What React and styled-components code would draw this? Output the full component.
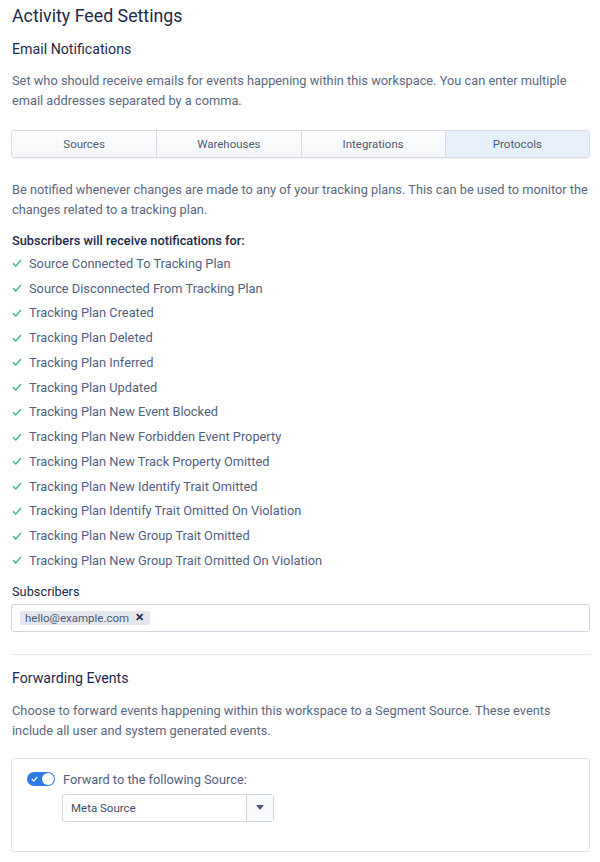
import React from "react";
import styled, { createGlobalStyle } from "styled-components";

const Global = createGlobalStyle`
  html, body { margin: 0; padding: 0; background: #fff; }
  body { font-family: Roboto, "Noto Sans", sans-serif; -webkit-font-smoothing: antialiased; }
  * { box-sizing: border-box; }
`;

const Page = styled.div`
  padding: 4px 10px 10px 12px;
  width: 600px;
  color: #525f7f;
  font-size: 12.8px;
`;

const Title = styled.h1`
  margin: 0;
  font-size: 17.8px;
  font-weight: 400;
  color: #1b2a4a;
  line-height: 24px;
`;

const SubTitle = styled.h2`
  margin: ${(p) => p.$mt ?? 9}px 0 0;
  font-size: 14.2px;
  font-weight: 400;
  color: #1b2a4a;
  line-height: 24px;
`;

const Para = styled.p`
  margin: ${(p) => p.$mt || 0}px 0 0;
  font-size: 12.8px;
  line-height: 20px;
  color: #5c6880;
`;

const Tabs = styled.div`
  margin-top: 19px;
  margin-left: -1px;
  display: grid;
  grid-template-columns: repeat(4, 1fr);
  border: 1px solid #d8dde5;
  border-radius: 3px;
  overflow: hidden;
  height: 28px;
  box-shadow: 0 1px 1px rgba(20, 40, 80, 0.06);
`;

const Tab = styled.div`
  display: flex;
  align-items: center;
  justify-content: center;
  font-size: 11.5px;
  color: #4d5a72;
  background: ${(p) => (p.$active ? "#e7f0fa" : "linear-gradient(#fdfdfe, #f4f6f8)")};
  border-left: ${(p) => (p.$first ? "none" : "1px solid #d8dde5")};
`;

const Strong = styled.div`
  margin-top: 11px;
  font-size: 12.8px;
  font-weight: 500;
  color: #1b2a4a;
  line-height: 20px;
`;

const List = styled.ul`
  list-style: none;
  margin: 0;
  padding: 0;
`;

const Item = styled.li`
  display: flex;
  align-items: center;
  height: 24.75px;
  font-size: 12.8px;
  color: #525f7f;
`;

const Check = styled.svg`
  width: 10px;
  height: 10px;
  margin-right: 7px;
  flex: none;
`;

const Label = styled.div`
  margin-top: 9px;
  font-size: 12.8px;
  color: #1b2a4a;
  line-height: 20px;
`;

const InputBox = styled.div`
  margin-top: 2px;
  margin-left: -1px;
  height: 28px;
  border: 1px solid #cfd5de;
  border-radius: 3px;
  display: flex;
  align-items: center;
  padding-left: 8px;
`;

const Chip = styled.span`
  display: inline-flex;
  align-items: center;
  gap: 6px;
  background: #e4e8ee;
  border-radius: 2px;
  padding: 0 6px 0 5px;
  height: 14px;
  font-size: 11.5px;
  color: #4d5a72;
`;

const ChipX = styled.span`
  font-size: 11px;
  font-weight: 700;
  color: #1b2a4a;
  line-height: 1;
`;

const Divider = styled.hr`
  margin: 22px 0 0 -1px;
  border: none;
  border-top: 1px solid #e6e9ee;
`;

const Card = styled.div`
  margin-top: 17px;
  margin-left: -1px;
  border: 1px solid #dfe3e9;
  border-radius: 3px;
  padding: 13px 15px 29px;
  height: 94px;
`;

const ToggleRow = styled.div`
  display: flex;
  align-items: center;
  gap: 8px;
  font-size: 12.8px;
  color: #525f7f;
`;

const Toggle = styled.div`
  position: relative;
  width: 28px;
  height: 14px;
  border-radius: 7px;
  background: #2b7ce6;
  flex: none;
`;

const Knob = styled.div`
  position: absolute;
  right: 1px;
  top: 1px;
  width: 12px;
  height: 12px;
  border-radius: 50%;
  background: #fff;
`;

const ToggleCheck = styled.svg`
  position: absolute;
  left: 4px;
  top: 4px;
  width: 7px;
  height: 6px;
`;

const Select = styled.div`
  margin: 7px 0 0 35px;
  width: 212px;
  height: 28px;
  border: 1px solid #d3d9e1;
  border-radius: 3px;
  display: flex;
`;

const SelectValue = styled.div`
  flex: 1;
  display: flex;
  align-items: center;
  padding-left: 8px;
  font-size: 11.5px;
  color: #3f4b62;
`;

const SelectArrow = styled.div`
  width: 27px;
  border-left: 1px solid #d3d9e1;
  background: #f8f9fb;
  display: flex;
  align-items: center;
  justify-content: center;
`;

const items = [
  "Source Connected To Tracking Plan",
  "Source Disconnected From Tracking Plan",
  "Tracking Plan Created",
  "Tracking Plan Deleted",
  "Tracking Plan Inferred",
  "Tracking Plan Updated",
  "Tracking Plan New Event Blocked",
  "Tracking Plan New Forbidden Event Property",
  "Tracking Plan New Track Property Omitted",
  "Tracking Plan New Identify Trait Omitted",
  "Tracking Plan Identify Trait Omitted On Violation",
  "Tracking Plan New Group Trait Omitted",
  "Tracking Plan New Group Trait Omitted On Violation",
];

export default function App() {
  return (
    <Page>
      <Global />
      <Title>Activity Feed Settings</Title>
      <SubTitle>Email Notifications</SubTitle>
      <Para $mt={10}>
        Set who should receive emails for events happening within this workspace. You can enter multiple
        email addresses separated by a comma.
      </Para>
      <Tabs>
        <Tab $first>Sources</Tab>
        <Tab>Warehouses</Tab>
        <Tab>Integrations</Tab>
        <Tab $active>Protocols</Tab>
      </Tabs>
      <Para $mt={22}>
        Be notified whenever changes are made to any of your tracking plans. This can be used to monitor the
        changes related to a tracking plan.
      </Para>
      <Strong>Subscribers will receive notifications for:</Strong>
      <List>
        {items.map((t) => (
          <Item key={t}>
            <Check viewBox="0 0 10 10">
              <path d="M1 5.2 L3.8 8 L9 2" fill="none" stroke="#3bb77e" strokeWidth="1.3" />
            </Check>
            {t}
          </Item>
        ))}
      </List>
      <Label>Subscribers</Label>
      <InputBox>
        <Chip>
          hello@example.com <ChipX>✕</ChipX>
        </Chip>
      </InputBox>
      <Divider />
      <SubTitle $mt={11}>Forwarding Events</SubTitle>
      <Para $mt={11}>
        Choose to forward events happening within this workspace to a Segment Source. These events
        include all user and system generated events.
      </Para>
      <Card>
        <ToggleRow>
          <Toggle>
            <ToggleCheck viewBox="0 0 7 6">
              <path d="M0.8 3 L2.8 5 L6.2 1" fill="none" stroke="#fff" strokeWidth="1.2" />
            </ToggleCheck>
            <Knob />
          </Toggle>
          Forward to the following Source:
        </ToggleRow>
        <Select>
          <SelectValue>Meta Source</SelectValue>
          <SelectArrow>
            <svg width="8" height="5" viewBox="0 0 8 5">
              <path d="M0 0 H8 L4 5 Z" fill="#4d5a72" />
            </svg>
          </SelectArrow>
        </Select>
      </Card>
    </Page>
  );
}
